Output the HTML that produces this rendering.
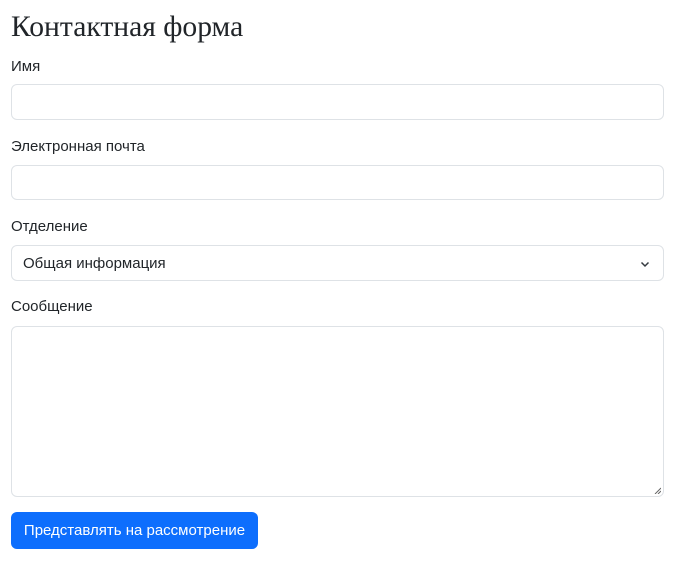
<!DOCTYPE html>
<html><head><meta charset="utf-8"><style>
body{margin:0;background:#fff;font-family:"Liberation Sans","Noto Sans CJK SC",sans-serif;color:#212529;width:677px;height:569px;position:relative;overflow:hidden}
.a{position:absolute}
h1{position:absolute;left:11px;top:7px;margin:0;font-family:"Liberation Serif","Noto Serif CJK SC",serif;font-weight:400;font-size:29.6px;line-height:40px;color:#212529}
.l{position:absolute;left:11px;font-size:15px;line-height:20px}
.f{position:absolute;left:11px;width:653px;border:1px solid #dee2e6;border-radius:6px;box-sizing:border-box;background:#fff}
.btn{position:absolute;left:11px;top:512px;width:247px;height:37px;background:#0d6efd;color:#fff;border-radius:6px;font-size:15px;line-height:37px;text-align:center}
</style></head><body>
<h1>Контактная форма</h1>
<div class="l" style="top:57px">Имя</div>
<div class="f" style="top:84px;height:36px"></div>
<div class="l" style="top:137px">Электронная почта</div>
<div class="f" style="top:165px;height:35px"></div>
<div class="l" style="top:217px">Отделение</div>
<div class="f" style="top:245px;height:36px"><span class="a" style="left:11px;top:8px;font-size:15px;line-height:20px">Общая информация</span>
<svg class="a" style="right:13px;top:14px" width="10" height="8" viewBox="0 0 10 8"><path d="M1.5 2.5L5 6L8.5 2.5" fill="none" stroke="#343a40" stroke-width="1.5"/></svg></div>
<div class="l" style="top:297px">Сообщение</div>
<div class="f" style="top:326px;height:171px"><svg class="a" style="right:2px;bottom:2px" width="7" height="7"><path d="M1 7L7 1M4 7L7 4" stroke="#666" stroke-width="1"/></svg></div>
<div class="btn">Представлять на рассмотрение</div>
</body></html>
